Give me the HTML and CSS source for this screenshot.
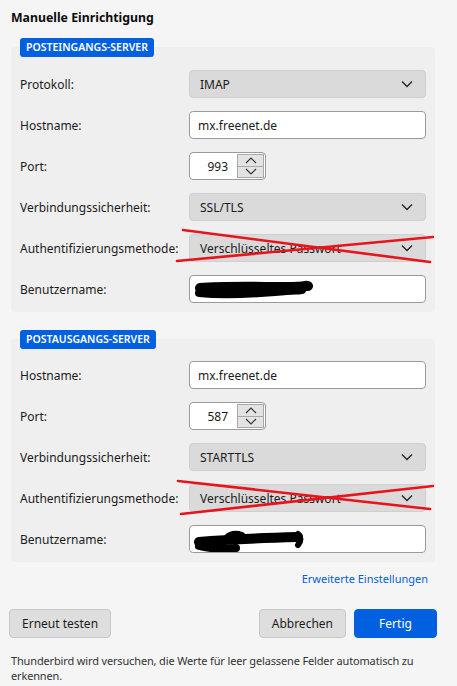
FILE: index.html
```html
<!DOCTYPE html>
<html lang="de">
<head>
<meta charset="utf-8">
<link rel="stylesheet" href="styles.css">
</head>
<body>
<div class="page">
  <h1 class="title">Manuelle Einrichtigung</h1>

  <section class="group">
    <div class="badge">POSTEINGANGS-SERVER</div>
    <div class="panel">
      <div class="row">
        <span class="label">Protokoll:</span>
        <div class="select">IMAP<svg class="chev" width="12" height="8" viewBox="0 0 12 8"><path d="M1 1.5l5 5 5-5" fill="none" stroke="#222" stroke-width="1.3"/></svg></div>
      </div>
      <div class="row">
        <span class="label">Hostname:</span>
        <div class="input">mx.freenet.de</div>
      </div>
      <div class="row">
        <span class="label">Port:</span>
        <div class="spin"><span class="num">993</span><span class="spinbtns"><span class="sb"><svg width="12" height="7" viewBox="0 0 12 7"><path d="M1 6l5-5 5 5" fill="none" stroke="#333" stroke-width="1.1"/></svg></span><span class="sb"><svg width="12" height="7" viewBox="0 0 12 7"><path d="M1 1l5 5 5-5" fill="none" stroke="#333" stroke-width="1.1"/></svg></span></span></div>
      </div>
      <div class="row">
        <span class="label">Verbindungssicherheit:</span>
        <div class="select">SSL/TLS<svg class="chev" width="12" height="8" viewBox="0 0 12 8"><path d="M1 1.5l5 5 5-5" fill="none" stroke="#222" stroke-width="1.3"/></svg></div>
      </div>
      <div class="row">
        <span class="label">Authentifizierungsmethode:</span>
        <div class="select">Verschlüsseltes Passwort<svg class="chev" width="12" height="8" viewBox="0 0 12 8"><path d="M1 1.5l5 5 5-5" fill="none" stroke="#222" stroke-width="1.3"/></svg></div>
      </div>
      <div class="row">
        <span class="label">Benutzername:</span>
        <div class="input redacted"><svg width="130" height="26" viewBox="0 0 130 26"><path d="M10 12 C 35 10, 70 11, 95 11 S 114 9, 118 10" fill="none" stroke="#000" stroke-width="10" stroke-linecap="round"/><path d="M9 17 C 30 19, 60 18, 85 16 S 105 15, 112 14" fill="none" stroke="#000" stroke-width="8" stroke-linecap="round"/></svg></div>
      </div>
    </div>
  </section>

  <section class="group">
    <div class="badge">POSTAUSGANGS-SERVER</div>
    <div class="panel">
      <div class="row">
        <span class="label">Hostname:</span>
        <div class="input">mx.freenet.de</div>
      </div>
      <div class="row">
        <span class="label">Port:</span>
        <div class="spin"><span class="num">587</span><span class="spinbtns"><span class="sb"><svg width="12" height="7" viewBox="0 0 12 7"><path d="M1 6l5-5 5 5" fill="none" stroke="#333" stroke-width="1.1"/></svg></span><span class="sb"><svg width="12" height="7" viewBox="0 0 12 7"><path d="M1 1l5 5 5-5" fill="none" stroke="#333" stroke-width="1.1"/></svg></span></span></div>
      </div>
      <div class="row">
        <span class="label">Verbindungssicherheit:</span>
        <div class="select">STARTTLS<svg class="chev" width="12" height="8" viewBox="0 0 12 8"><path d="M1 1.5l5 5 5-5" fill="none" stroke="#222" stroke-width="1.3"/></svg></div>
      </div>
      <div class="row">
        <span class="label">Authentifizierungsmethode:</span>
        <div class="select">Verschlüsseltes Passwort<svg class="chev" width="12" height="8" viewBox="0 0 12 8"><path d="M1 1.5l5 5 5-5" fill="none" stroke="#222" stroke-width="1.3"/></svg></div>
      </div>
      <div class="row">
        <span class="label">Benutzername:</span>
        <div class="input redacted"><svg width="130" height="28" viewBox="0 0 130 28"><path d="M9 17 C 30 15, 70 13, 108 12" fill="none" stroke="#000" stroke-width="10" stroke-linecap="round"/><path d="M9 21 C 20 24, 32 24, 46 23" fill="none" stroke="#000" stroke-width="8" stroke-linecap="round"/><path d="M36 13 C 40 9, 46 8, 52 10" fill="none" stroke="#000" stroke-width="6" stroke-linecap="round"/><path d="M108 9 C 111 12, 111 16, 108 20" fill="none" stroke="#000" stroke-width="6" stroke-linecap="round"/></svg></div>
      </div>
    </div>
  </section>

  <div class="advanced"><a class="link">Erweiterte Einstellungen</a></div>

  <div class="actions">
    <button class="btn">Erneut testen</button>
    <div class="spacer"></div>
    <button class="btn">Abbrechen</button>
    <button class="btn primary">Fertig</button>
  </div>

  <p class="note">Thunderbird wird versuchen, die Werte für leer gelassene Felder automatisch zu erkennen.</p>
</div>

<svg class="strike" width="457" height="686" viewBox="0 0 457 686">
  <g stroke="#e8141c" stroke-width="2.6" stroke-linecap="round" fill="none">
    <path d="M183 230 L 430 262"/>
    <path d="M177 261 L 433 237"/>
    <path d="M178 481 L 430 509"/>
    <path d="M181 514 L 433 486"/>
  </g>
</svg>
</body>
</html>
```

FILE: styles.css
```css
* { box-sizing: border-box; }
html, body { margin: 0; padding: 0; }
body {
  background: #f5f5f5;
  font-family: "Noto Sans", "Open Sans", sans-serif;
  font-size: 12px;
  color: #1b1b1b;
  width: 457px;
  height: 686px;
  overflow: hidden;
  position: relative;
}
.page {
  width: 437px;
  padding: 8px 0 0 9px;
  display: flex;
  flex-direction: column;
}
.title {
  margin: 0 0 0 2px;
  font-size: 12.3px;
  font-weight: 700;
  line-height: 20px;
  color: #0c0c0d;
}
.group {
  margin: 10px 2px 0 2px;
  display: flex;
  flex-direction: column;
}
.group + .group { margin-top: 18px; }
.badge {
  align-self: flex-start;
  margin-left: 9px;
  background: #0060df;
  color: #fff;
  font-size: 10.5px;
  font-weight: 600;
  line-height: 18px;
  height: 19px;
  padding: 0 6px;
  border-radius: 3px;
  position: relative;
  z-index: 1;
}
.panel {
  margin-top: -10px;
  background: #efefef;
  border-radius: 4px;
  padding: 23px 9px 9px 9px;
  display: flex;
  flex-direction: column;
  gap: 13px;
}
.group + .group .panel { padding-top: 22px; }
.row {
  display: flex;
  align-items: center;
  height: 28px;
}
.label {
  width: 169px;
  flex: none;
  font-size: 12px;
}
.select {
  width: 237px;
  height: 28px;
  background: #dadada;
  border: 1px solid #cfcfcf;
  border-radius: 4px;
  display: flex;
  align-items: center;
  justify-content: space-between;
  padding: 0 12px 0 10px;
  font-size: 12px;
}
.chev { flex: none; }
.input {
  width: 237px;
  height: 28px;
  background: #fff;
  border: 1px solid #9a9a9a;
  border-radius: 4px;
  display: flex;
  align-items: center;
  padding: 0 8px;
  font-size: 12px;
}
.input.redacted { padding: 0; overflow: hidden; }
.input.redacted svg { display: block; }
.spin {
  width: 77px;
  height: 28px;
  background: #fff;
  border: 1px solid #9a9a9a;
  border-radius: 4px;
  display: flex;
  align-items: center;
  padding: 1px 1px 1px 0;
  font-size: 12px;
}
.num {
  flex: 1;
  text-align: right;
  padding-right: 9px;
}
.spinbtns {
  width: 27px;
  height: 100%;
  display: flex;
  flex-direction: column;
  border: 1px solid #a8a8a8;
}
.sb {
  flex: 1;
  background: #e3e3e3;
  display: flex;
  align-items: center;
  justify-content: center;
}
.sb + .sb { border-top: 1px solid #a8a8a8; }
.sb svg { display: block; }
.advanced {
  display: flex;
  justify-content: flex-end;
  padding: 9px 9px 0 0;
  line-height: 16px;
}
.link {
  color: #0060df;
  font-size: 11px;
}
.actions {
  display: flex;
  align-items: center;
  gap: 8px;
  margin-top: 22px;
}
.spacer { flex: 1; }
.btn {
  font-family: inherit;
  font-size: 12px;
  color: #1b1b1b;
  height: 29px;
  padding: 0 12px;
  background: #dedede;
  border: 1px solid #c8c8c8;
  border-radius: 4px;
}
.btn.primary {
  background: #0060df;
  border-color: #0060df;
  color: #fff;
  min-width: 83px;
}
.note {
  margin: 15px 0 0 2px;
  font-size: 11px;
  letter-spacing: -0.15px;
  line-height: 15px;
  color: #333;
}
.strike {
  position: absolute;
  left: 0;
  top: 0;
  pointer-events: none;
}
```
